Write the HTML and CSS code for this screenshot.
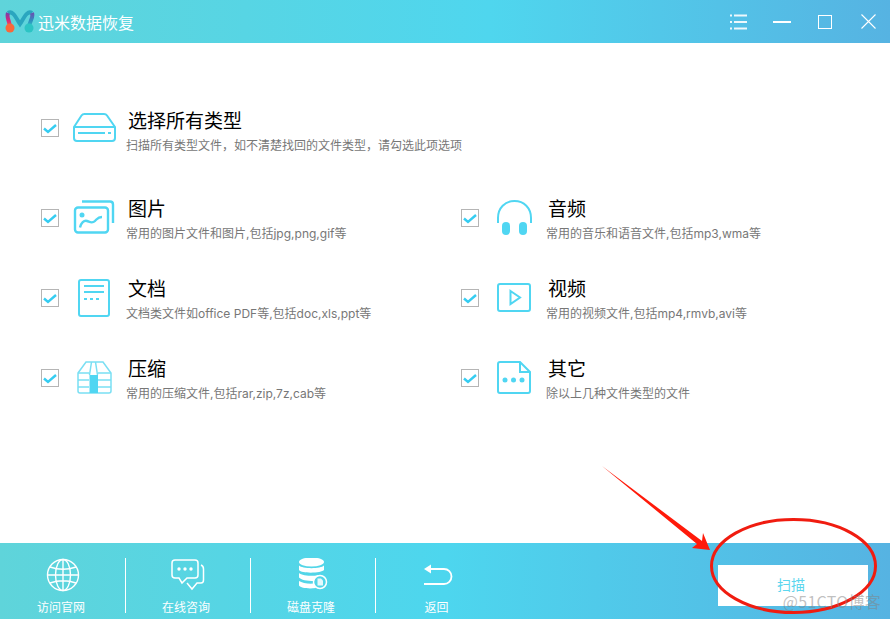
FILE: index.html
```html
<!DOCTYPE html>
<html lang="zh-CN">
<head>
  <meta charset="UTF-8" />
  <title>迅米数据恢复</title>
  <link rel="stylesheet" href="styles.css">
</head>
<body>
  <div class="app">
    <header class="titlebar">
      <svg class="logo" width="30" height="25" viewBox="0 0 30 25" fill="none">
        <defs>
          <linearGradient id="lg1" x1="0" y1="0" x2="0" y2="1"><stop offset="0" stop-color="#7a3fa8"/><stop offset=".5" stop-color="#d8287f"/><stop offset="1" stop-color="#f9683a"/></linearGradient>
          <linearGradient id="lg2" x1="0" y1="0" x2="0" y2="1"><stop offset="0" stop-color="#6a4fb0"/><stop offset=".5" stop-color="#2f8fc0"/><stop offset="1" stop-color="#2cc4c4"/></linearGradient>
        </defs>
        <path d="M3 4C8 1 11 9 15 15C19 9 22 1 27 4" stroke="#2aa6bf" stroke-width="4"/>
        <path d="M3 4C1 9 5 12 5 19" stroke="url(#lg1)" stroke-width="4"/>
        <path d="M27 4C29 9 24 12 24 19" stroke="url(#lg2)" stroke-width="4"/>
        <circle cx="5" cy="19" r="4.500" fill="#f9683a"/>
        <circle cx="24" cy="19" r="4.500" fill="#2cc4c4"/>
      </svg>
      <span class="app-name">迅米数据恢复</span>
      <div class="win-btns">
        <svg width="17" height="16" viewBox="0 0 17 16" stroke="#fff" stroke-width="2" opacity=".9"><path d="M0 1.500h2M4 1.500h13M0 8h2M4 8h13M0 14.500h2M4 14.500h13"/></svg>
        <svg width="18" height="16" viewBox="0 0 18 16" stroke="#fff" stroke-width="2"><path d="M0 8h18"/></svg>
        <svg width="14" height="14" viewBox="0 0 14 14" fill="none" stroke="#fff"><rect x=".5" y=".5" width="13" height="13"/></svg>
        <svg width="15" height="15" viewBox="0 0 15 15" fill="none" stroke="#fff" stroke-width="1.100"><path d="M.5.500l14 14M14.500.500l-14 14"/></svg>
      </div>
    </header>

    <main class="content">
      <div class="type-item all-item">
        <span class="check"><svg width="14" height="11" viewBox="0 0 14 11" fill="none" stroke="#35cdf2" stroke-width="2.400"><path d="M1 5.500l4 3.500 8-7"/></svg></span>
        <svg class="type-icon" width="46" height="30" viewBox="0 0 46 30" fill="none" stroke="#50d6f2" stroke-width="2"><path d="M4 14L11.500 2.500Q12.500 1 14.500 1H34Q36 1 37 2.500L45 14V25Q45 28 42 28H7Q4 28 4 25ZM4 14H45"/><path d="M8 20H35M38 20h3"/></svg>
        <div class="type-text">
          <h2>选择所有类型</h2>
          <p>扫描所有类型文件，如不清楚找回的文件类型，请勾选此项选项</p>
        </div>
      </div>

      <div class="type-grid">
        <div class="type-item">
          <span class="check"><svg width="14" height="11" viewBox="0 0 14 11" fill="none" stroke="#35cdf2" stroke-width="2.400"><path d="M1 5.500l4 3.500 8-7"/></svg></span>
          <svg class="type-icon" width="46" height="36" viewBox="0 0 46 36" fill="none" stroke="#50d6f2" stroke-width="2.400"><path d="M12 1.500H40Q43 1.500 43 4.500V23"/><rect x="5" y="7.500" width="33" height="25" rx="3"/><circle cx="12" cy="15" r="2.500" fill="#50d6f2" stroke="none"/><path d="M10 27.500C11 23 14 20 17 21S22 24 25 21 28 17 32 17"/></svg>
          <div class="type-text">
            <h2>图片</h2>
            <p>常用的图片文件和图片,包括jpg,png,gif等</p>
          </div>
        </div>
        <div class="type-item">
          <span class="check"><svg width="14" height="11" viewBox="0 0 14 11" fill="none" stroke="#35cdf2" stroke-width="2.400"><path d="M1 5.500l4 3.500 8-7"/></svg></span>
          <svg class="type-icon" width="46" height="36" viewBox="0 0 46 36" fill="none" stroke="#50d6f2" stroke-width="2"><path d="M8 23V18C8 8 15 1 24.500 1S41 8 41 18V23"/><rect x="12" y="22" width="8" height="13" rx="4" fill="#50d6f2" stroke="none"/><rect x="29" y="22" width="8" height="13" rx="4" fill="#50d6f2" stroke="none"/></svg>
          <div class="type-text">
            <h2>音频</h2>
            <p>常用的音乐和语音文件,包括mp3,wma等</p>
          </div>
        </div>
        <div class="type-item">
          <span class="check"><svg width="14" height="11" viewBox="0 0 14 11" fill="none" stroke="#35cdf2" stroke-width="2.400"><path d="M1 5.500l4 3.500 8-7"/></svg></span>
          <svg class="type-icon" width="46" height="38" viewBox="0 0 46 38" fill="none" stroke="#50d6f2" stroke-width="2"><rect x="9" y="1" width="30" height="36" rx="2"/><path d="M14 7H34M14 13H34"/><path d="M14 20h3M20 20h3M26 20h3"/></svg>
          <div class="type-text">
            <h2>文档</h2>
            <p>文档类文件如office PDF等,包括doc,xls,ppt等</p>
          </div>
        </div>
        <div class="type-item">
          <span class="check"><svg width="14" height="11" viewBox="0 0 14 11" fill="none" stroke="#35cdf2" stroke-width="2.400"><path d="M1 5.500l4 3.500 8-7"/></svg></span>
          <svg class="type-icon" width="46" height="30" viewBox="0 0 46 30" fill="none" stroke="#50d6f2" stroke-width="2"><rect x="8" y="1" width="32" height="27" rx="2"/><path d="M20.500 8L30 14.500L20.500 21Z"/></svg>
          <div class="type-text">
            <h2>视频</h2>
            <p>常用的视频文件,包括mp4,rmvb,avi等</p>
          </div>
        </div>
        <div class="type-item">
          <span class="check"><svg width="14" height="11" viewBox="0 0 14 11" fill="none" stroke="#35cdf2" stroke-width="2.400"><path d="M1 5.500l4 3.500 8-7"/></svg></span>
          <svg class="type-icon" width="46" height="34" viewBox="0 0 46 34" fill="none" stroke="#7adff3" stroke-width="1.500"><path d="M8 12L16 1H33L41 12V30Q41 32 39 32H10Q8 32 8 30Z"/><path d="M8 12H19M28 12H41M8 19H19M28 19H41M8 26H19M28 26H41M21.500 1L19.500 14M25.500 1L27.500 14"/><path d="M19.500 14H28V32H19.500Z" fill="#50d6f2" stroke="none"/></svg>
          <div class="type-text">
            <h2>压缩</h2>
            <p>常用的压缩文件,包括rar,zip,7z,cab等</p>
          </div>
        </div>
        <div class="type-item">
          <span class="check"><svg width="14" height="11" viewBox="0 0 14 11" fill="none" stroke="#35cdf2" stroke-width="2.400"><path d="M1 5.500l4 3.500 8-7"/></svg></span>
          <svg class="type-icon" width="46" height="34" viewBox="0 0 46 34" fill="none" stroke="#50d6f2" stroke-width="2"><path d="M30 1H10Q8 1 8 3V30Q8 32 10 32H38Q40 32 40 30V11ZM30 1V11H40"/><g fill="#50d6f2" stroke="none"><circle cx="15" cy="19" r="2.500"/><circle cx="23.500" cy="19" r="2.500"/><circle cx="32" cy="19" r="2.500"/></g></svg>
          <div class="type-text">
            <h2>其它</h2>
            <p>除以上几种文件类型的文件</p>
          </div>
        </div>
      </div>
    </main>

    <footer class="bottombar">
      <a class="tool">
        <svg width="34" height="34" viewBox="0 0 34 34" fill="none" stroke="#fff" stroke-width="1.400"><circle cx="17" cy="17" r="15.500"/><ellipse cx="17" cy="17" rx="7.500" ry="15.500"/><path d="M17 1.500V32.500M1.500 17H32.500M4 9Q17 13.500 30 9M4 25Q17 20.500 30 25"/></svg>
        <span>访问官网</span>
      </a>
      <a class="tool">
        <svg width="34" height="34" viewBox="0 0 34 34" fill="none" stroke="#fff" stroke-width="1.500"><path d="M4 2H24Q27 2 27 5V17Q27 20 24 20H16L11 25L8 20H4Q1 20 1 17V5Q1 2 4 2Z"/><path d="M30 7Q32.500 8 32.500 11V22Q32.500 25 30 25H26L21 31L16 25"/><g fill="#fff" stroke="none"><circle cx="8" cy="11" r="1.700"/><circle cx="14" cy="11" r="1.700"/><circle cx="20" cy="11" r="1.700"/></g></svg>
        <span>在线咨询</span>
      </a>
      <a class="tool">
        <svg width="34" height="34" viewBox="0 0 34 34"><g fill="#fff"><ellipse cx="15.500" cy="4" rx="12.500" ry="4.500"/><path d="M3 7.500C6 11 25 11 28 7.500V12C26 15 6 16 3 12Z"/><path d="M3 15C6 18 20 18.500 23 17Q19 19.500 18 23C11 23 5 22 3 19.500Z"/><path d="M3 23C6 25 12 26 18 25.500Q18.500 28 20 30C12 31 5 30 3 27.500Z"/></g><circle cx="24" cy="24" r="6.500" fill="none" stroke="#fff" stroke-width="1.500"/><path d="M21.500 20.500h3.500l2 2v5h-5.500z" fill="#fff" opacity=".85"/></svg>
        <span>磁盘克隆</span>
      </a>
      <a class="tool">
        <svg width="34" height="34" viewBox="0 0 34 34" fill="none" stroke="#fff" stroke-width="1.800"><path d="M8 11H22A7.500 7.500 0 0 1 22 26H2"/><path d="M2 11L9 6.500V15.500Z" fill="#fff" stroke="none"/></svg>
        <span>返回</span>
      </a>
      <button class="scan-btn">扫描</button>
    </footer>
  </div>

  <!-- 红色标注 -->
  <svg class="markup" width="890" height="619" viewBox="0 0 890 619" fill="none">
    <path d="M602 466L702 541L703 533L710 550L692 548L697 544Z" fill="#ff1a0a"/>
    <ellipse cx="793.500" cy="566" rx="82" ry="46.500" stroke="#f01c10" stroke-width="3"/>
  </svg>
  <div class="watermark">@51CTO博客</div>
</body>
</html>
```

FILE: styles.css
```css
html, body {
  margin: 0;
  padding: 0;
}
body {
  width: 890px;
  height: 619px;
  overflow: hidden;
  font-family: "Noto Sans CJK SC", "Open Sans", sans-serif;
  background: #fff;
}
.app {
  display: flex;
  flex-direction: column;
  height: 619px;
}
.titlebar {
  height: 43px;
  display: flex;
  align-items: center;
  padding: 0 14px 0 5px;
  background: linear-gradient(90deg, #5fd4da 0%, #4fd6ee 55%, #56b3e2 100%);
  color: #fff;
}
.logo {
  flex: none;
}
.app-name {
  font-size: 16px;
  margin-left: 3px;
}
.win-btns {
  margin-left: auto;
  display: flex;
  align-items: center;
  gap: 26px;
}
.win-btns svg:nth-child(3) {
  margin-left: 1px;
}
.win-btns svg:nth-child(4) {
  margin-left: 3px;
}
.content {
  flex: 1;
  padding: 60px 0 0 41px;
}
.type-item {
  display: flex;
  align-items: center;
  height: 50px;
}
.all-item {
  margin-bottom: 40px;
}
.all-item .type-text {
  padding-top: 5px;
}
.type-grid {
  display: grid;
  grid-template-columns: 420px 1fr;
  row-gap: 30px;
}
.check {
  flex: none;
  width: 16px;
  height: 16px;
  border: 1px solid #b5b5b5;
  display: flex;
  align-items: center;
  justify-content: center;
  margin-right: 11px;
}
.type-icon {
  flex: none;
  width: 46px;
}
.type-text {
  margin-left: 10px;
}
.type-text h2 {
  margin: 0 0 0 2px;
  font-size: 19px;
  font-weight: 400;
  line-height: 28px;
  color: #000;
}
.type-text p {
  margin: 3px 0 0;
  font-family: Inter, "Noto Sans CJK SC", sans-serif;
  font-size: 12px;
  line-height: 18px;
  color: #777;
  white-space: nowrap;
}
.bottombar {
  height: 76px;
  box-sizing: border-box;
  display: flex;
  align-items: flex-start;
  background: linear-gradient(90deg, #5fd4da 0%, #4dd6ee 50%, #56b3e2 100%);
  padding: 15px 22px 0 1px;
}
.tool {
  width: 125px;
  height: 55px;
  box-sizing: border-box;
  display: flex;
  flex-direction: column;
  align-items: center;
  justify-content: space-between;
  border-right: 1px solid #fff;
  color: #fff;
  font-size: 12px;
  line-height: 16px;
}
.tool span {
  margin: 0 4px -2px 0;
}
.tool:nth-child(4) {
  border-right: 0;
}
.scan-btn {
  margin-left: auto;
  margin-top: 7px;
  width: 150px;
  height: 41px;
  border: 0;
  padding: 0 4px 3px 0;
  background: #fff;
  color: #5dd6ee;
  font: inherit;
  font-size: 14px;
  line-height: 16px;
}
.markup {
  position: absolute;
  left: 0;
  top: 0;
}
.watermark {
  position: absolute;
  right: 9px;
  bottom: 9px;
  font-size: 16px;
  line-height: 18px;
  letter-spacing: 0.3px;
  color: rgba(130, 130, 130, 0.5);
}
```
